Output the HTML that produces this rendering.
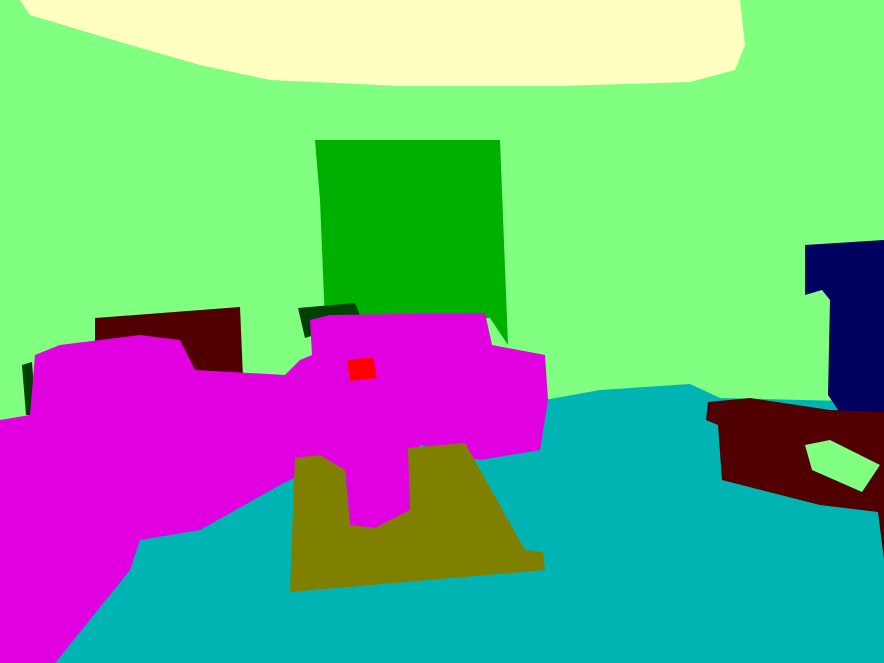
<!DOCTYPE html>
<html><head><style>html,body{margin:0;padding:0;overflow:hidden}svg{display:block}</style></head><body>
<svg width="884" height="663" viewBox="0 0 884 663" xmlns="http://www.w3.org/2000/svg">
<rect width="884" height="663" fill="#80ff80"/>
<polygon fill="#ffffc0" points="20,0 740,0 745,45 735,70 690,82 560,86 400,86 270,80 200,65 120,42 30,15"/>
<polygon fill="#00b4b4" points="250,490 545,400 600,390 690,384 720,398 884,402 884,663 55,663 130,545"/>
<polygon fill="#00b000" points="315,140 500,140 508,345 490,318 325,322 320,200"/>
<polygon fill="#004000" points="298,308 355,303 362,320 305,338"/>
<polygon fill="#004000" points="22,365 32,362 36,415 26,415"/>
<polygon fill="#500000" points="95,318 240,307 243,378 95,378"/>
<polygon fill="#e000e0" points="0,420 30,415 35,355 60,345 140,335 180,340 195,370 285,375 300,360 312,355 310,320 330,315 485,313 492,345 545,355 548,400 540,450 480,460 420,445 410,510 375,528 350,525 345,470 310,470 280,485 200,530 140,540 130,570 55,663 0,663"/>
<polygon fill="#808000" points="295,458 320,455 345,470 350,525 375,528 410,510 408,448 465,443 525,550 543,552 545,570 290,592"/>
<polygon fill="#ff0000" points="347,360 373,357 377,378 350,381"/>
<polygon fill="#000060" points="805,245 884,240 884,413 840,413 828,395 830,300 822,290 805,295"/>
<polygon fill="#500000" points="708,402 750,398 830,410 884,412 884,560 878,512 820,505 722,480 718,425 706,420"/>
<polygon fill="#80ff80" points="805,445 830,440 880,465 862,492 812,470"/>
</svg>
</body></html>
